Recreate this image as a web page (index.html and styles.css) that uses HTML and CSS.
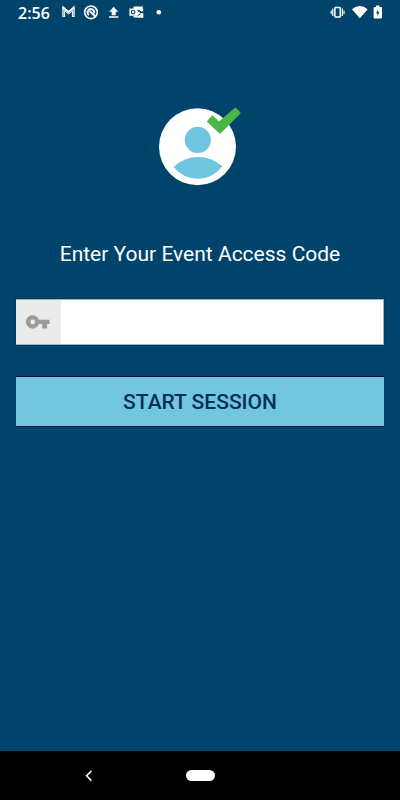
FILE: index.html
```
<!DOCTYPE html>
<html lang="en">
<head>
<meta charset="utf-8">
<title>Event Access</title>
<link rel="stylesheet" href="styles.css">
</head>
<body>
<div class="screen">
  <header class="status">
    <span class="time">2:56</span>
    <svg class="notifications" width="106" height="24" viewBox="60 0 106 24" fill="none">
      <path d="M63.7 17V8.6L68.5 12.6L73.3 8.6V17" stroke="#fff" stroke-width="2.8"/>
      <path d="M63.7 16.3V9.4L68.5 13.2L73.3 9.4V16.3" stroke="#7896b4" stroke-width=".8"/>
      <circle cx="91" cy="12.3" r="6.3" stroke="#fff" stroke-width="1.6"/>
      <path d="M89 15.1A3.3 3.3 0 1 1 94.1 13.4" stroke="#fff" stroke-width="1.8"/>
      <path d="M89.6 11L95.6 16.8" stroke="#fff" stroke-width="1.9"/>
      <path d="M113.7 6.8L118.3 11.8H115.7V15.2H111.7V11.8H109.1ZM109.1 16.2H118.3V17.8H109.1Z" fill="#fff"/>
      <path d="M133.5 6.5H142.8V10H133.5ZM137 10.2L143.2 13.8V17.5H133.5V15.5H137Z" fill="#fff"/>
      <path d="M137.5 9L143.2 12.5V9ZM137.5 16.5L143.2 13V17.5H137.5Z" fill="#fff"/>
      <rect x="129.4" y="8.5" width="7.6" height="7.2" rx=".5" fill="#fff"/>
      <circle cx="133.2" cy="12.1" r="1.8" stroke="#00446c" stroke-width="1.1"/>
      <path d="M137.8 10.6L141 12.8L143.2 11.2M137.6 15.8L140.6 13.8" stroke="#00446c" stroke-width="1"/>
      <circle cx="158.8" cy="12.3" r="2.3" fill="#fff"/>
    </svg>
    <svg class="system" width="56" height="24" viewBox="330 0 56 24">
      <rect x="334.9" y="7.5" width="5.4" height="9.6" rx=".6" fill="none" stroke="#fff" stroke-width="1.5"/>
      <path d="M332.8 8.6V16M331.2 10.6V14M342.4 8.6V16M344 10.6V14" fill="none" stroke="#fff" stroke-width="1.2"/>
      <path d="M351.9 9.2Q359.8 2.8 367.7 9.2L359.8 18.3Z" fill="#fff"/>
      <path d="M376 5.6H379.4V7H381A1 1 0 0 1 382 8V17.6A1 1 0 0 1 381 18.6H374.6A1 1 0 0 1 373.6 17.6V8A1 1 0 0 1 374.6 7H376Z" fill="#fff"/>
      <path d="M378.1 9.6L376 13.2H377.4V15.9L379.6 12.2H378.1Z" fill="#00446c"/>
    </svg>
  </header>
  <main class="login">
    <svg class="logo" width="84" height="80" viewBox="158 107 84 80">
      <circle cx="197.5" cy="146.8" r="38.5" fill="#fff"/>
      <circle cx="197.8" cy="139.9" r="13.1" fill="#70c6e0"/>
      <path d="M173.6 166.9Q184.5 157.1 198 157.1Q211.5 157.1 222.3 166.3Q212.5 178.8 198 178.8Q183.5 178.8 173.6 166.9Z" fill="#70c6e0"/>
      <path d="M212.3 116.3L219 122.2L235.5 108.4L240 113.1L220 132.9L207.7 121.4Z" fill="#4cb749" stroke="#4cb749" stroke-width="1.4" stroke-linejoin="round"/>
    </svg>
    <h1 class="title">Enter Your Event Access Code</h1>
    <div class="field">
      <span class="field-icon">
        <svg width="24" height="14" viewBox="0 0 24 14"><path fill="#9c9c9c" fill-rule="evenodd" d="M12.9 4.7A6.7 6.7 0 1 0 12.9 9.1H16.2V13.4H21.1V9.1H23.6V4.7ZM6.7 4.6A2.3 2.3 0 1 1 6.7 9.2A2.3 2.3 0 0 1 6.7 4.6Z"/></svg>
      </span>
      <input class="code" type="text" aria-label="Access code">
    </div>
    <button class="start" type="button">START SESSION</button>
  </main>
  <nav class="navbar">
    <svg class="back" width="8" height="12" viewBox="0 0 8 12"><path d="M6.4 1L1.6 5.8L6.4 10.6" fill="none" stroke="#fff" stroke-width="1.6"/></svg>
    <span class="home"></span>
  </nav>
</div>
</body>
</html>
```
FILE: styles.css
```
* { box-sizing: border-box; }
body { margin: 0; font-family: Roboto, sans-serif; }
.screen {
  width: 400px;
  height: 800px;
  display: flex;
  flex-direction: column;
  background: #00446c;
  overflow: hidden;
}
.status {
  height: 24px;
  display: flex;
  align-items: center;
  padding: 0 14px 0 18px;
  color: #fff;
}
.time {
  width: 42px;
  font: 600 16px/26px "Open Sans", sans-serif;
  padding-top: 1px;
}
.system { margin-left: auto; }
.login {
  flex: 1;
  display: flex;
  flex-direction: column;
  padding: 83px 16px 0;
}
.logo { margin-left: 142px; flex: none; }
.title {
  margin: 51px 0 0;
  font-size: 21px;
  font-weight: 400;
  line-height: 32px;
  text-align: center;
  color: #fff;
  white-space: nowrap;
}
.field {
  height: 46px;
  margin-top: 29px;
  display: flex;
  border: 1px solid #a5aebb;
  border-width: 1px 1px 1px 0;
  background: #fff;
  box-shadow: 0 0 1px #00104c;
}
.field-icon {
  width: 45px;
  padding-right: 1px;
  display: flex;
  align-items: center;
  justify-content: center;
  background: #ebebeb;
}
.code {
  flex: 1;
  min-width: 0;
  border: 0;
  padding: 0 12px;
  outline: 0;
  background: #fff;
  font: 20px Roboto, sans-serif;
}
.start {
  height: 51px;
  margin-top: 31px;
  padding: 1px 0 0;
  border: 0;
  border-top: 1px solid #00104c;
  border-bottom: 1px solid #00104c;
  background: #72c6de;
  color: #002f5c;
  font: 500 21px/48px Roboto, sans-serif;
}
.navbar {
  height: 49px;
  display: flex;
  align-items: center;
  padding-left: 85px;
  background: #000;
}
.home {
  width: 29px;
  height: 11px;
  margin-left: 93px;
  border-radius: 6px;
  background: #fff;
}
```
